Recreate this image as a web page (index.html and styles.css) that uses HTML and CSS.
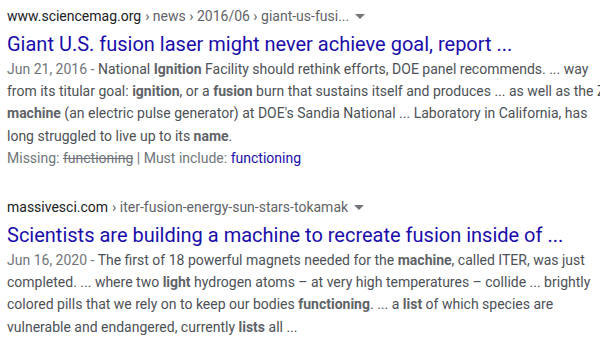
FILE: index.html
```html
<!DOCTYPE html>
<html lang="en">
<head>
    <meta charset="UTF-8">
    <meta name="viewport" content="width=device-width, initial-scale=1.0">
    <title>Search results</title>
    <link rel="stylesheet" href="styles.css">
</head>
<body>

    <div class="results">
        <!-- First result -->
        <div class="result">
            <div class="cite">
                <span class="domain">www.sciencemag.org</span>
                <span class="crumbs">› news › 2016/06 › giant-us-fusi...</span>
                <span class="caret"></span>
            </div>
            <a class="title" href="#">Giant U.S. fusion laser might never achieve goal, report ...</a>
            <div class="snippet">
                <span class="date">Jun 21, 2016 - </span>National <b>Ignition</b> Facility should rethink efforts, DOE panel recommends. ... way from its titular goal: <b>ignition</b>, or a <b>fusion</b> burn that sustains itself and produces ... as well as the Z <b>machine</b> (an electric pulse generator) at DOE's Sandia National ... Laboratory in California, has long struggled to live up to its <b>name</b>.
            </div>
            <div class="missing">
                Missing: <s>functioning</s> | Must include: <a href="#">functioning</a>
            </div>
        </div>

        <!-- Second result -->
        <div class="result">
            <div class="cite">
                <span class="domain">massivesci.com</span>
                <span class="crumbs">› iter-fusion-energy-sun-stars-tokamak</span>
                <span class="caret"></span>
            </div>
            <a class="title" href="#">Scientists are building a machine to recreate fusion inside of ...</a>
            <div class="snippet">
                <span class="date">Jun 16, 2020 - </span>The first of 18 powerful magnets needed for the <b>machine</b>, called ITER, was just completed. ... where two <b>light</b> hydrogen atoms – at very high temperatures – collide ... brightly colored pills that we rely on to keep our bodies <b>functioning</b>. ... a <b>list</b> of which species are vulnerable and endangered, currently <b>lists</b> all ...
            </div>
        </div>
    </div>

</body>
</html>
```

FILE: styles.css
```css
body {
    margin: 0;
    font-family: Roboto, Arial, sans-serif;
    background: #fff;
    overflow: hidden;
}
.results {
    padding: 7px 0 0 7px;
    width: 600px;
}
.result {
    margin-bottom: 29px;
}
.cite {
    font-size: 14px;
    line-height: 18px;
    display: flex;
    align-items: center;
    gap: 4px;
    white-space: nowrap;
}
.domain {
    color: #202124;
}
.crumbs {
    color: #5f6368;
}
/* small dropdown arrow after the url */
.caret {
    margin-left: 2px;
    width: 0;
    height: 0;
    border-left: 5px solid transparent;
    border-right: 5px solid transparent;
    border-top: 5px solid #70757a;
}
.title {
    display: block;
    color: #1a0dab;
    font-size: 20px;
    line-height: 26px;
    padding-top: 6px;
    margin-bottom: 1px;
    text-decoration: none;
    white-space: nowrap;
}
.snippet {
    color: #4d5156;
    font-size: 14px;
    line-height: 22.2px;
}
.snippet b {
    color: #5f6368;
    font-weight: bold;
}
.date {
    color: #70757a;
}
.missing {
    color: #70757a;
    font-size: 14px;
    line-height: 22.2px;
}
.missing a {
    color: #1a0dab;
    text-decoration: none;
}
```
